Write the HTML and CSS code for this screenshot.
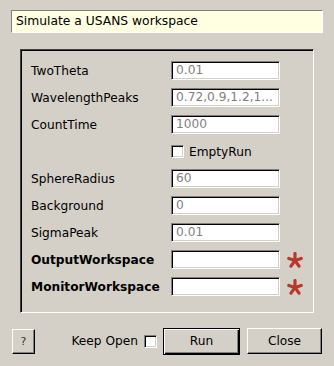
FILE: index.html
```html
<!DOCTYPE html>
<html>
<head>
<meta charset="utf-8">
<link rel="stylesheet" href="styles.css">
</head>
<body>
<div class="dialog">
  <div class="desc">Simulate a USANS workspace</div>
  <div class="group">
    <div class="grid">
      <div class="label">TwoTheta</div><div class="input">0.01</div><div></div>
      <div class="label">WavelengthPeaks</div><div class="input">0.72,0.9,1.2,1...</div><div></div>
      <div class="label">CountTime</div><div class="input">1000</div><div></div>
      <div></div><div class="check-cell"><span class="checkbox"></span><span>EmptyRun</span></div><div></div>
      <div class="label">SphereRadius</div><div class="input">60</div><div></div>
      <div class="label">Background</div><div class="input">0</div><div></div>
      <div class="label">SigmaPeak</div><div class="input">0.01</div><div></div>
      <div class="label bold">OutputWorkspace</div><div class="input"></div>
      <div class="star"><svg width="16" height="16" viewBox="0 0 16 16"><g stroke="#b8392b" stroke-width="3.2" stroke-linecap="round"><line x1="8" y1="8.5" x2="8" y2="1.5"/><line x1="8" y1="8.5" x2="1.8" y2="6.5"/><line x1="8" y1="8.5" x2="14.2" y2="6.5"/><line x1="8" y1="8.5" x2="4" y2="14.2"/><line x1="8" y1="8.5" x2="12" y2="14.2"/></g></svg></div>
      <div class="label bold">MonitorWorkspace</div><div class="input"></div>
      <div class="star"><svg width="16" height="16" viewBox="0 0 16 16"><g stroke="#b8392b" stroke-width="3.2" stroke-linecap="round"><line x1="8" y1="8.5" x2="8" y2="1.5"/><line x1="8" y1="8.5" x2="1.8" y2="6.5"/><line x1="8" y1="8.5" x2="14.2" y2="6.5"/><line x1="8" y1="8.5" x2="4" y2="14.2"/><line x1="8" y1="8.5" x2="12" y2="14.2"/></g></svg></div>
    </div>
  </div>
  <div class="buttons">
    <div class="btn help">?</div>
    <div class="right">
      <span class="keep">Keep Open</span>
      <span class="checkbox"></span>
      <div class="btn run">Run</div>
      <div class="btn close">Close</div>
    </div>
  </div>
</div>
</body>
</html>
```
FILE: styles.css
```css
html, body {
  margin: 0;
  padding: 0;
  background: #d4d0c8;
}
body {
  font-family: "DejaVu Sans", sans-serif;
  font-size: 12.2px;
  color: #000;
}
.dialog {
  width: 334px;
  height: 366px;
  padding-top: 10px;
  box-sizing: border-box;
}
.desc {
  margin-left: 11px;
  width: 312px;
  height: 23px;
  box-sizing: border-box;
  background: #ffffe1;
  border-top: 1px solid #808080;
  border-left: 1px solid #808080;
  border-right: 1px solid #fff;
  border-bottom: 1px solid #fff;
  padding-left: 4px;
  line-height: 21px;
  font-size: 12.3px;
}
.group {
  margin-top: 16px;
  margin-left: 20px;
  width: 294px;
  height: 264px;
  box-sizing: border-box;
  border-top: 1px solid #404040;
  border-left: 1px solid #404040;
  border-right: 1px solid #fff;
  border-bottom: 1px solid #fff;
  box-shadow: inset 1px 1px 0 #000;
  padding: 11px 0 0 10px;
}
.grid {
  display: grid;
  grid-template-columns: 140px 109px 1fr;
  grid-auto-rows: 19px;
  row-gap: 8px;
  align-items: center;
}
.label {
  white-space: nowrap;
}
.bold {
  font-weight: bold;
}
.input {
  height: 19px;
  box-sizing: border-box;
  background: #fff;
  border-top: 1px solid #808080;
  border-left: 1px solid #808080;
  border-right: 1px solid #fff;
  border-bottom: 1px solid #fff;
  box-shadow: inset 1px 1px 0 #000, inset -1px -1px 0 #d4d0c8;
  color: #808080;
  padding-left: 4px;
  line-height: 17px;
  white-space: nowrap;
  overflow: hidden;
}
.check-cell {
  display: flex;
  align-items: center;
  gap: 5px;
}
.checkbox {
  display: inline-block;
  width: 13px;
  height: 13px;
  box-sizing: border-box;
  background: #fff;
  border-top: 1px solid #808080;
  border-left: 1px solid #808080;
  border-right: 1px solid #fff;
  border-bottom: 1px solid #fff;
  box-shadow: inset 1px 1px 0 #000, inset -1px -1px 0 #d4d0c8;
}
.star {
  display: flex;
  align-items: center;
  padding-left: 7px;
  height: 19px;
}
.buttons {
  margin-top: 15px;
  display: flex;
  justify-content: space-between;
  align-items: center;
  padding: 0 12px;
  height: 26px;
}
.right {
  display: flex;
  align-items: center;
}
.keep {
  margin-right: 6px;
}
.btn {
  box-sizing: border-box;
  height: 25px;
  display: flex;
  align-items: center;
  justify-content: center;
  border-top: 1px solid #fff;
  border-left: 1px solid #fff;
  border-right: 1px solid #000;
  border-bottom: 1px solid #000;
  box-shadow: inset -1px -1px 0 #808080;
}
.help {
  width: 23px;
  font-size: 11px;
  color: #333;
}
.run {
  margin-left: 6px;
  width: 77px;
  height: 27px;
  border: 1px solid #000;
  box-shadow: inset 1px 1px 0 #fff, inset -1px -1px 0 #000, inset -2px -2px 0 #808080;
}
.close {
  margin-left: 7px;
  width: 75px;
  height: 26px;
}
```
